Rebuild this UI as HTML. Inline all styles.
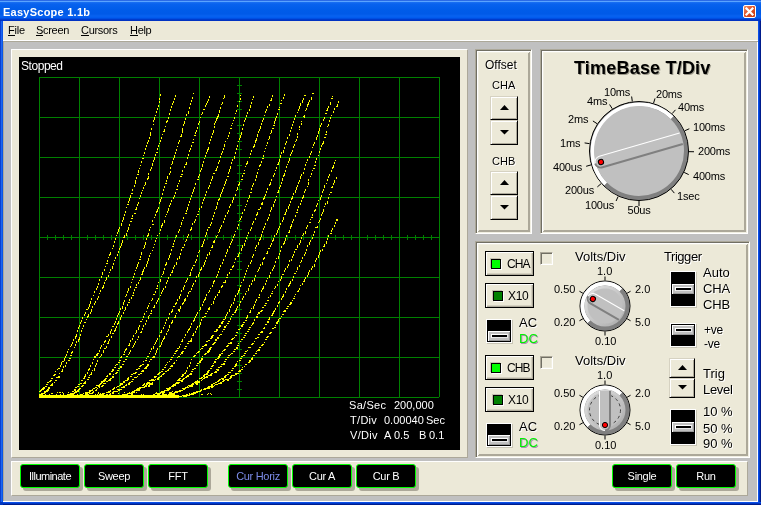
<!DOCTYPE html>
<html><head><meta charset="utf-8">
<style>
*{box-sizing:border-box}
html,body{margin:0;padding:0}
body{width:761px;height:505px;overflow:hidden;position:relative;background:#c0c0c0;font-family:"Liberation Sans",sans-serif;-webkit-font-smoothing:antialiased;}
.a{position:absolute}
.t{position:absolute;white-space:pre;line-height:1;will-change:transform;font-family:"Liberation Sans",sans-serif;color:#000}
#title{left:0;top:0;width:761px;height:21px;background:linear-gradient(to bottom,#2a6ae6 0px,#2a6ae6 1px,#5aa4ff 1px,#5aa4ff 2px,#1c70f2 2px,#0862ee 4px,#005ce9 10px,#005ae8 14px,#0862f0 16px,#005aee 18px,#0044d6 19px,#0032c2 20px,#0032c2 21px)}
#menu{left:3px;top:21px;width:755px;height:20px;background:#ece9d8;border-bottom:1px solid #fff}
.panel{position:absolute;background:#ece9d8;border-top:1px solid #fff;border-left:1px solid #fff;border-right:1px solid #aca899;border-bottom:1px solid #aca899}
.grp{position:absolute;background:#ece9d8;border:1px solid;border-color:#aca899 #fff #fff #aca899;box-shadow:inset 1px 1px 0 #716f64,inset -1px -1px 0 #f1efe2,inset 2px 2px 0 #fff,inset -2px -2px 0 #aca899,inset 3px 3px 0 #f1efe2,inset -3px -3px 0 #aca899}
.chk{position:absolute;width:13px;height:13px;background:#ece9d8;border:1px solid;border-color:#aca899 #fff #fff #aca899;box-shadow:inset 1px 1px 0 #716f64,inset -1px -1px 0 #f1efe2}
.sw{position:absolute;background:#000;border:1px solid #fff;box-shadow:1px 1px 0 #c8c5b5}
.lev{position:absolute;background:#c0c0c0;border:1px solid #000;box-shadow:inset 1px 1px 0 #fff,inset -1px -1px 0 #9a9a9a}
.slot{position:absolute;left:3px;top:3px;width:17px;height:4px;background:#000;border:1px solid;border-color:#fff #e8e8e8 #e8e8e8 #fff}
.btn{position:absolute;background:#ece9d8;border:1px solid;border-color:#d6d2c2 #000 #000 #d6d2c2;box-shadow:inset 1px 1px 0 #fff,inset -1px -1px 0 #aca899}
.btn2{position:absolute;background:#ece9d8;border:1px solid #000;box-shadow:inset 1px 1px 0 #fff,inset -1px -1px 0 #aca899,inset -2px -2px 0 #d4d0c0}
.bbtn{position:absolute;will-change:transform;letter-spacing:-0.3px;width:60px;height:24px;background:#000;border:1px solid #00ff00;border-radius:3px;box-shadow:3px 3px 0 #aca899;color:#fff;font-size:11px;text-align:center;line-height:22px;white-space:pre}
</style></head><body>
<div id="title" class="a"></div>
<div class="t" style="left:3px;top:7px;font-size:11px;font-weight:bold;color:#fff;letter-spacing:0.25px">EasyScope 1.1b</div>
<!-- close button -->
<div class="a" style="left:743px;top:5px;width:13px;height:13px;border-radius:2px;border:1px solid #fff;background:linear-gradient(135deg,#f0906a 0%,#e0542a 45%,#c8380e 100%)"></div>
<svg class="a" style="left:743px;top:5px" width="13" height="13"><path d="M3.5 3.5L9.5 9.5M9.5 3.5L3.5 9.5" stroke="#fff" stroke-width="2.2" stroke-linecap="square"/></svg>
<!-- window borders -->
<div class="a" style="left:0;top:21px;width:3px;height:484px;background:linear-gradient(to right,#0a3ed0 0px,#0a3ed0 1px,#1c66f0 1px,#1c66f0 2px,#0b55e6 2px)"></div>
<div class="a" style="left:758px;top:21px;width:3px;height:481px;background:linear-gradient(to right,#0a4ee8 0px,#0a4ee8 1px,#0036c0 1px,#0036c0 2px,#001c8c 2px)"></div>
<div class="a" style="left:3px;top:502px;width:758px;height:3px;background:linear-gradient(to bottom,#0a4ee8 0px,#0a4ee8 1px,#0036c0 1px,#0036c0 2px,#001c8c 2px)"></div>
<div class="a" style="left:0;top:502px;width:3px;height:3px;background:#0036c0"></div>
<div class="a" style="left:757px;top:42px;width:1px;height:460px;background:#fff"></div>
<div id="menu" class="a"></div>
<div class="a" style="left:3px;top:41px;width:755px;height:1px;background:#aca899"></div>
<div class="a" style="left:3px;top:42px;width:1px;height:460px;background:#aca899"></div>
<div class="a" style="left:3px;top:501px;width:755px;height:1px;background:#fff"></div>
<div class="t" style="left:8px;top:25px;font-size:11px;letter-spacing:-0.2px"><u style="text-decoration:none;border-bottom:1px solid #000;display:inline-block;line-height:11px;height:11px">F</u>ile</div>
<div class="t" style="left:36px;top:25px;font-size:11px;letter-spacing:-0.3px"><u style="text-decoration:none;border-bottom:1px solid #000;display:inline-block;line-height:11px;height:11px">S</u>creen</div>
<div class="t" style="left:81px;top:25px;font-size:11px;letter-spacing:-0.3px"><u style="text-decoration:none;border-bottom:1px solid #000;display:inline-block;line-height:11px;height:11px">C</u>ursors</div>
<div class="t" style="left:130px;top:25px;font-size:11px;letter-spacing:-0.3px"><u style="text-decoration:none;border-bottom:1px solid #000;display:inline-block;line-height:11px;height:11px">H</u>elp</div>

<!-- scope panel -->
<div class="panel" style="left:11px;top:49px;width:457px;height:409px"></div>
<div class="a" style="left:19px;top:57px;width:441px;height:393px;background:#000"></div>
<svg class="a" style="left:0;top:0" width="761" height="505" viewBox="0 0 761 505"><g fill="#008000"><rect x="39" y="77" width="1" height="321"/><rect x="79" y="77" width="1" height="321"/><rect x="119" y="77" width="1" height="321"/><rect x="159" y="77" width="1" height="321"/><rect x="199" y="77" width="1" height="321"/><rect x="239" y="77" width="1" height="321"/><rect x="279" y="77" width="1" height="321"/><rect x="319" y="77" width="1" height="321"/><rect x="359" y="77" width="1" height="321"/><rect x="399" y="77" width="1" height="321"/><rect x="439" y="77" width="1" height="320"/><rect x="39" y="77" width="401" height="1"/><rect x="39" y="117" width="401" height="1"/><rect x="39" y="157" width="401" height="1"/><rect x="39" y="197" width="401" height="1"/><rect x="39" y="237" width="401" height="1"/><rect x="39" y="277" width="401" height="1"/><rect x="39" y="317" width="401" height="1"/><rect x="39" y="357" width="401" height="1"/><rect x="39" y="397" width="400" height="1"/><rect x="47" y="235" width="1" height="5"/><rect x="55" y="235" width="1" height="5"/><rect x="63" y="235" width="1" height="5"/><rect x="71" y="235" width="1" height="5"/><rect x="87" y="235" width="1" height="5"/><rect x="95" y="235" width="1" height="5"/><rect x="103" y="235" width="1" height="5"/><rect x="111" y="235" width="1" height="5"/><rect x="127" y="235" width="1" height="5"/><rect x="135" y="235" width="1" height="5"/><rect x="143" y="235" width="1" height="5"/><rect x="151" y="235" width="1" height="5"/><rect x="167" y="235" width="1" height="5"/><rect x="175" y="235" width="1" height="5"/><rect x="183" y="235" width="1" height="5"/><rect x="191" y="235" width="1" height="5"/><rect x="207" y="235" width="1" height="5"/><rect x="215" y="235" width="1" height="5"/><rect x="223" y="235" width="1" height="5"/><rect x="231" y="235" width="1" height="5"/><rect x="247" y="235" width="1" height="5"/><rect x="255" y="235" width="1" height="5"/><rect x="263" y="235" width="1" height="5"/><rect x="271" y="235" width="1" height="5"/><rect x="287" y="235" width="1" height="5"/><rect x="295" y="235" width="1" height="5"/><rect x="303" y="235" width="1" height="5"/><rect x="311" y="235" width="1" height="5"/><rect x="327" y="235" width="1" height="5"/><rect x="335" y="235" width="1" height="5"/><rect x="343" y="235" width="1" height="5"/><rect x="351" y="235" width="1" height="5"/><rect x="367" y="235" width="1" height="5"/><rect x="375" y="235" width="1" height="5"/><rect x="383" y="235" width="1" height="5"/><rect x="391" y="235" width="1" height="5"/><rect x="407" y="235" width="1" height="5"/><rect x="415" y="235" width="1" height="5"/><rect x="423" y="235" width="1" height="5"/><rect x="431" y="235" width="1" height="5"/><rect x="237" y="85" width="5" height="1"/><rect x="237" y="93" width="5" height="1"/><rect x="237" y="101" width="5" height="1"/><rect x="237" y="109" width="5" height="1"/><rect x="237" y="125" width="5" height="1"/><rect x="237" y="133" width="5" height="1"/><rect x="237" y="141" width="5" height="1"/><rect x="237" y="149" width="5" height="1"/><rect x="237" y="165" width="5" height="1"/><rect x="237" y="173" width="5" height="1"/><rect x="237" y="181" width="5" height="1"/><rect x="237" y="189" width="5" height="1"/><rect x="237" y="205" width="5" height="1"/><rect x="237" y="213" width="5" height="1"/><rect x="237" y="221" width="5" height="1"/><rect x="237" y="229" width="5" height="1"/><rect x="237" y="245" width="5" height="1"/><rect x="237" y="253" width="5" height="1"/><rect x="237" y="261" width="5" height="1"/><rect x="237" y="269" width="5" height="1"/><rect x="237" y="285" width="5" height="1"/><rect x="237" y="293" width="5" height="1"/><rect x="237" y="301" width="5" height="1"/><rect x="237" y="309" width="5" height="1"/><rect x="237" y="325" width="5" height="1"/><rect x="237" y="333" width="5" height="1"/><rect x="237" y="341" width="5" height="1"/><rect x="237" y="349" width="5" height="1"/><rect x="237" y="365" width="5" height="1"/><rect x="237" y="373" width="5" height="1"/><rect x="237" y="381" width="5" height="1"/><rect x="237" y="389" width="5" height="1"/></g><rect x="39" y="395" width="140" height="3" fill="#ffff00"/><path d="M98 393h1v1h-1zM211 394h1v1h-1zM207 394h1v1h-1zM173 393h1v1h-1zM161 392h1v1h-1zM70 393h1v1h-1zM62 392h1v1h-1zM77 394h1v1h-1zM41 393h1v1h-1zM124 392h1v1h-1zM100 393h1v1h-1zM187 395h1v1h-1zM125 394h1v1h-1zM59 392h1v1h-1zM125 394h1v1h-1zM68 392h1v1h-1zM72 394h1v1h-1zM63 394h1v1h-1zM98 392h1v1h-1zM80 394h1v1h-1zM56 394h1v1h-1zM210 393h1v1h-1zM60 394h1v1h-1zM202 394h1v1h-1zM208 393h1v1h-1zM83 393h1v1h-1zM143 394h1v1h-1zM156 392h1v1h-1zM186 395h1v1h-1zM141 394h1v1h-1zM57 392h1v1h-1zM201 394h1v1h-1zM170 392h1v1h-1zM52 393h1v1h-1zM60 392h1v1h-1zM85 393h1v1h-1zM170 393h1v1h-1zM118 393h1v1h-1zM176 392h1v1h-1zM40 394h1v1h-1zM97 394h1v1h-1zM95 394h1v1h-1zM63 393h1v1h-1zM87 393h1v1h-1zM49 394h1v1h-1zM136 392h1v1h-1zM45 394h1v1h-1zM51 393h1v1h-1z" fill="#ffff00" shape-rendering="crispEdges"/><path d="M39 391h2v1h-2zM40 390h2v1h-2zM41 389h2v1h-2zM42 388h2v2h-2zM43 387h2v2h-2zM45 386h2v1h-2zM46 384h2v1h-2zM47 382h2v1h-2zM49 381h2v1h-2zM50 380h2v1h-2zM51 378h2v1h-2zM53 375h2v1h-2zM54 374h2v1h-2zM55 371h1v1h-1zM57 369h1v1h-1zM58 368h2v1h-2zM60 365h1v2h-1zM61 362h1v3h-1zM62 361h2v1h-2zM64 358h1v3h-1zM65 356h1v2h-1zM66 354h1v2h-1zM67 351h1v2h-1zM68 349h1v1h-1zM70 346h1v1h-1zM71 344h1v2h-1zM72 342h1v2h-1zM73 339h1v2h-1zM75 336h1v3h-1zM76 334h1v3h-1zM77 330h1v2h-1zM78 327h1v2h-1zM79 325h1v2h-1zM80 322h1v2h-1zM81 320h1v2h-1zM82 317h1v2h-1zM84 314h1v2h-1zM85 312h1v2h-1zM86 309h2v1h-2zM88 307h1v2h-1zM89 304h1v3h-1zM90 301h1v3h-1zM91 298h1v2h-1zM93 295h1v1h-1zM94 291h1v2h-1zM96 288h1v2h-1zM97 286h1v2h-1zM98 283h1v2h-1zM99 279h1v2h-1zM101 276h1v2h-1zM102 272h1v3h-1zM104 269h1v2h-1zM105 266h1v1h-1zM106 263h2v1h-2zM107 260h1v2h-1zM108 257h1v1h-1zM109 254h1v2h-1zM110 252h1v3h-1zM112 248h1v1h-1zM113 245h1v2h-1zM114 241h1v2h-1zM115 238h1v2h-1zM116 235h1v1h-1zM117 232h1v2h-1zM118 229h1v3h-1zM119 227h1v2h-1zM121 223h1v3h-1zM122 220h1v2h-1zM123 217h1v3h-1zM124 214h1v2h-1zM125 211h1v2h-1zM126 207h1v1h-1zM127 204h2v1h-2zM128 201h1v2h-1zM129 198h1v3h-1zM130 195h1v3h-1zM131 193h2v1h-2zM132 189h1v2h-1zM134 185h1v2h-1zM135 182h1v2h-1zM135 180h1v2h-1zM136 177h1v2h-1zM137 174h2v1h-2zM138 170h1v3h-1zM139 168h1v1h-1zM140 165h1v1h-1zM141 161h1v2h-1zM142 158h2v1h-2zM143 155h1v1h-1zM144 152h1v2h-1zM145 148h1v2h-1zM146 145h1v2h-1zM147 142h1v2h-1zM148 140h1v2h-1zM149 137h1v2h-1zM150 134h1v2h-1zM150 132h1v2h-1zM151 128h1v2h-1zM153 124h1v1h-1zM153 120h1v2h-1zM154 117h1v3h-1zM155 115h1v1h-1zM156 111h1v2h-1zM157 108h1v2h-1zM158 105h1v2h-1zM159 101h1v2h-1zM159 98h1v2h-1zM160 94h1v2h-1zM39 394h2v1h-2zM40 394h2v1h-2zM41 393h2v2h-2zM43 393h2v1h-2zM44 391h2v2h-2zM46 390h2v2h-2zM47 389h2v2h-2zM48 387h2v2h-2zM50 385h2v1h-2zM51 384h2v2h-2zM52 383h1v1h-1zM54 382h1v1h-1zM55 380h2v1h-2zM56 377h2v1h-2zM58 376h2v2h-2zM59 373h1v1h-1zM61 371h2v1h-2zM62 369h1v2h-1zM63 366h1v2h-1zM65 365h1v2h-1zM66 362h1v2h-1zM68 360h2v1h-2zM69 358h2v1h-2zM70 355h2v1h-2zM71 352h1v2h-1zM72 351h1v2h-1zM74 347h1v1h-1zM75 344h1v2h-1zM76 341h1v2h-1zM78 339h1v3h-1zM79 337h1v3h-1zM80 334h1v2h-1zM81 330h1v2h-1zM82 328h1v1h-1zM83 325h1v2h-1zM84 322h2v1h-2zM86 319h1v1h-1zM87 316h1v2h-1zM88 314h1v3h-1zM90 312h1v2h-1zM91 309h1v3h-1zM92 306h1v2h-1zM94 303h1v2h-1zM95 301h1v2h-1zM97 298h1v2h-1zM98 296h1v2h-1zM99 293h1v1h-1zM100 290h1v2h-1zM102 287h1v2h-1zM103 285h1v3h-1zM104 282h1v2h-1zM105 280h1v1h-1zM106 277h1v3h-1zM108 275h1v2h-1zM109 272h1v1h-1zM110 269h1v2h-1zM112 266h1v3h-1zM113 263h1v2h-1zM114 260h1v1h-1zM115 257h1v2h-1zM117 254h1v2h-1zM118 251h1v2h-1zM119 248h1v2h-1zM120 246h1v2h-1zM121 243h1v3h-1zM122 240h1v3h-1zM123 237h2v1h-2zM124 235h1v2h-1zM126 233h1v3h-1zM127 230h1v2h-1zM128 227h1v3h-1zM129 224h1v2h-1zM130 221h2v1h-2zM131 218h2v1h-2zM132 215h1v2h-1zM134 213h2v1h-2zM135 209h2v1h-2zM136 207h1v2h-1zM137 204h1v2h-1zM138 202h1v2h-1zM139 198h1v1h-1zM140 195h1v2h-1zM141 192h1v2h-1zM142 190h1v1h-1zM143 187h1v2h-1zM144 185h1v1h-1zM145 182h1v3h-1zM147 178h1v2h-1zM148 176h1v3h-1zM148 173h1v2h-1zM150 169h1v2h-1zM151 167h1v2h-1zM152 163h1v3h-1zM153 160h1v2h-1zM154 157h1v3h-1zM155 154h1v2h-1zM156 152h2v1h-2zM157 148h1v2h-1zM158 145h1v2h-1zM159 143h1v1h-1zM160 140h1v2h-1zM161 137h1v2h-1zM162 134h1v1h-1zM163 131h2v1h-2zM164 129h1v3h-1zM165 126h1v1h-1zM166 121h1v2h-1zM167 120h1v2h-1zM168 117h1v2h-1zM169 113h1v2h-1zM170 109h1v2h-1zM171 106h1v2h-1zM172 103h1v2h-1zM173 101h1v2h-1zM174 98h1v2h-1zM175 95h1v2h-1zM58 396h2v1h-2zM59 396h2v1h-2zM60 396h2v2h-2zM62 396h2v1h-2zM63 396h2v2h-2zM64 396h2v1h-2zM65 396h2v2h-2zM66 395h2v1h-2zM67 394h2v2h-2zM68 394h2v2h-2zM69 394h2v2h-2zM71 393h2v1h-2zM72 391h2v1h-2zM74 389h2v2h-2zM75 387h2v1h-2zM77 386h2v1h-2zM78 384h2v1h-2zM80 383h2v1h-2zM81 380h2v1h-2zM83 378h1v1h-1zM84 376h1v3h-1zM85 374h1v3h-1zM87 372h1v2h-1zM88 369h1v2h-1zM89 368h1v2h-1zM90 365h1v2h-1zM92 362h1v2h-1zM93 359h1v1h-1zM94 356h2v2h-2zM96 354h2v2h-2zM97 353h2v1h-2zM99 350h1v2h-1zM100 347h1v2h-1zM101 345h1v2h-1zM103 344h1v1h-1zM104 341h1v2h-1zM105 340h1v2h-1zM106 336h2v1h-2zM108 334h1v2h-1zM110 331h1v3h-1zM111 329h1v2h-1zM112 326h2v1h-2zM114 323h1v2h-1zM115 321h1v2h-1zM116 318h1v2h-1zM117 315h1v2h-1zM118 313h1v2h-1zM119 311h1v2h-1zM120 308h1v2h-1zM122 306h1v3h-1zM123 302h1v3h-1zM124 300h1v2h-1zM125 296h1v1h-1zM126 294h1v2h-1zM127 291h1v2h-1zM128 288h1v3h-1zM130 286h1v2h-1zM131 282h1v1h-1zM132 279h1v1h-1zM133 276h1v2h-1zM134 273h1v2h-1zM135 270h1v1h-1zM136 267h1v2h-1zM137 264h1v3h-1zM138 262h1v2h-1zM139 259h2v1h-2zM140 256h1v2h-1zM141 252h1v3h-1zM143 248h1v1h-1zM144 245h1v3h-1zM145 242h1v3h-1zM146 238h1v2h-1zM147 235h1v2h-1zM148 233h1v3h-1zM149 229h1v2h-1zM150 227h1v1h-1zM152 224h2v1h-2zM152 220h1v2h-1zM154 217h1v1h-1zM155 214h1v2h-1zM156 211h1v2h-1zM157 209h1v3h-1zM158 207h1v2h-1zM159 202h1v2h-1zM160 199h1v3h-1zM161 197h1v2h-1zM162 193h1v2h-1zM163 189h1v2h-1zM164 186h1v2h-1zM165 183h2v1h-2zM166 180h1v2h-1zM167 176h1v3h-1zM169 173h1v2h-1zM170 171h1v2h-1zM170 167h1v2h-1zM171 164h1v1h-1zM172 161h1v3h-1zM173 158h1v2h-1zM174 155h1v3h-1zM175 152h1v2h-1zM176 149h1v2h-1zM177 146h1v1h-1zM178 142h1v2h-1zM179 140h1v2h-1zM180 136h2v1h-2zM181 134h1v3h-1zM182 130h1v3h-1zM182 128h1v2h-1zM183 124h1v2h-1zM184 121h1v3h-1zM185 118h1v2h-1zM186 114h1v2h-1zM188 111h1v3h-1zM189 107h1v2h-1zM190 103h1v2h-1zM191 100h1v2h-1zM192 97h1v2h-1zM193 93h1v1h-1zM60 396h2v2h-2zM61 396h1v1h-1zM63 396h2v1h-2zM64 396h1v1h-1zM66 396h2v2h-2zM67 396h1v1h-1zM68 395h2v1h-2zM69 394h2v1h-2zM71 394h2v1h-2zM72 394h2v1h-2zM73 393h2v1h-2zM74 392h1v1h-1zM75 391h2v2h-2zM77 390h2v2h-2zM78 389h2v1h-2zM79 388h2v1h-2zM81 386h2v1h-2zM82 385h2v1h-2zM83 383h1v1h-1zM84 382h2v2h-2zM85 381h1v1h-1zM87 379h2v1h-2zM88 377h2v1h-2zM89 375h1v1h-1zM90 374h1v1h-1zM91 372h1v3h-1zM92 370h1v1h-1zM94 368h1v3h-1zM95 365h1v2h-1zM96 363h1v2h-1zM97 360h1v2h-1zM99 357h1v1h-1zM100 356h1v1h-1zM101 354h1v2h-1zM103 350h1v3h-1zM104 348h2v1h-2zM106 346h1v2h-1zM107 343h1v1h-1zM108 341h1v3h-1zM109 339h1v2h-1zM111 336h1v2h-1zM112 333h2v1h-2zM114 330h1v2h-1zM115 328h1v3h-1zM116 326h1v2h-1zM117 323h1v2h-1zM118 321h1v3h-1zM120 317h1v3h-1zM121 315h1v2h-1zM123 312h1v2h-1zM124 310h1v1h-1zM125 307h1v3h-1zM127 304h1v2h-1zM128 302h2v1h-2zM129 299h1v2h-1zM131 297h1v2h-1zM132 295h2v1h-2zM133 292h1v2h-1zM134 289h1v2h-1zM135 287h2v1h-2zM136 284h1v2h-1zM138 282h1v2h-1zM139 280h1v1h-1zM140 277h1v3h-1zM141 274h2v1h-2zM142 271h1v3h-1zM143 269h1v3h-1zM144 267h1v2h-1zM146 264h1v3h-1zM147 261h1v3h-1zM148 258h1v3h-1zM149 255h1v2h-1zM150 253h1v1h-1zM152 250h1v1h-1zM153 247h1v1h-1zM154 244h1v1h-1zM155 240h1v2h-1zM156 238h1v1h-1zM157 235h1v1h-1zM159 233h1v1h-1zM160 229h1v2h-1zM161 225h1v3h-1zM162 223h1v3h-1zM164 220h1v3h-1zM165 216h1v1h-1zM166 214h1v1h-1zM167 211h1v2h-1zM168 208h1v3h-1zM169 205h1v2h-1zM170 203h1v2h-1zM171 200h1v2h-1zM173 197h1v2h-1zM174 195h1v2h-1zM175 192h1v2h-1zM176 189h2v1h-2zM177 185h1v2h-1zM178 183h1v1h-1zM179 180h1v2h-1zM180 176h2v1h-2zM181 174h2v1h-2zM182 170h1v2h-1zM184 166h1v2h-1zM185 164h1v1h-1zM186 162h1v3h-1zM187 157h1v2h-1zM188 154h1v2h-1zM189 150h1v2h-1zM190 148h1v2h-1zM191 145h1v2h-1zM192 142h2v1h-2zM193 139h1v1h-1zM194 135h2v1h-2zM195 132h1v2h-1zM196 130h1v2h-1zM197 127h1v2h-1zM198 123h1v2h-1zM199 121h1v2h-1zM200 117h1v1h-1zM201 114h1v1h-1zM202 112h1v2h-1zM203 109h2v1h-2zM205 105h1v2h-1zM206 103h1v2h-1zM207 101h1v2h-1zM208 99h1v2h-1zM209 96h1v2h-1zM68 396h1v1h-1zM69 396h2v1h-2zM71 396h2v1h-2zM72 396h2v1h-2zM73 396h2v1h-2zM75 396h2v1h-2zM77 396h2v1h-2zM78 396h2v1h-2zM79 395h2v1h-2zM81 394h2v1h-2zM82 394h1v1h-1zM83 393h1v1h-1zM85 392h2v2h-2zM86 392h2v1h-2zM88 392h2v1h-2zM89 390h2v2h-2zM90 390h2v1h-2zM91 390h2v1h-2zM92 389h1v1h-1zM93 388h2v1h-2zM95 387h2v1h-2zM96 385h2v1h-2zM98 385h2v2h-2zM99 384h2v1h-2zM100 383h2v1h-2zM101 381h2v2h-2zM103 380h2v2h-2zM104 379h2v2h-2zM105 378h2v1h-2zM106 376h2v1h-2zM107 375h1v1h-1zM109 373h2v2h-2zM111 371h2v1h-2zM112 369h2v2h-2zM114 367h2v1h-2zM115 365h1v1h-1zM116 364h2v1h-2zM118 362h2v1h-2zM119 360h2v1h-2zM120 357h2v1h-2zM121 356h1v1h-1zM123 354h2v1h-2zM124 351h1v2h-1zM125 349h1v2h-1zM126 348h1v2h-1zM128 345h2v1h-2zM129 343h1v2h-1zM130 340h1v2h-1zM132 338h1v2h-1zM133 335h1v2h-1zM135 333h1v1h-1zM136 330h1v3h-1zM138 327h1v3h-1zM139 325h1v2h-1zM140 321h2v1h-2zM142 319h1v1h-1zM143 316h1v2h-1zM144 313h1v2h-1zM146 311h1v1h-1zM147 307h1v2h-1zM148 305h1v2h-1zM149 303h1v1h-1zM151 300h1v1h-1zM152 298h1v2h-1zM153 294h2v1h-2zM155 291h1v2h-1zM156 288h2v1h-2zM157 285h1v2h-1zM158 282h1v1h-1zM160 279h1v3h-1zM161 276h1v1h-1zM162 274h1v1h-1zM163 271h1v3h-1zM164 268h1v2h-1zM165 264h1v2h-1zM166 262h1v3h-1zM168 258h1v2h-1zM169 255h1v3h-1zM170 253h1v2h-1zM171 249h1v2h-1zM172 246h2v1h-2zM173 243h1v2h-1zM174 240h1v2h-1zM175 237h1v1h-1zM176 235h1v2h-1zM178 231h1v2h-1zM179 229h1v2h-1zM180 226h1v1h-1zM181 222h1v3h-1zM182 220h1v1h-1zM183 217h1v2h-1zM185 213h2v1h-2zM186 210h1v2h-1zM187 207h1v3h-1zM188 204h1v2h-1zM189 201h1v2h-1zM190 198h1v2h-1zM191 195h1v2h-1zM192 192h1v2h-1zM193 189h1v3h-1zM194 187h1v2h-1zM195 183h1v2h-1zM197 179h2v1h-2zM198 176h1v2h-1zM199 174h1v2h-1zM200 170h1v2h-1zM201 168h1v2h-1zM202 164h1v3h-1zM203 161h1v2h-1zM204 158h1v1h-1zM205 155h1v2h-1zM206 152h1v2h-1zM207 149h1v3h-1zM208 147h1v3h-1zM209 142h1v2h-1zM210 139h1v2h-1zM211 136h1v2h-1zM212 133h1v2h-1zM213 130h1v3h-1zM214 126h1v2h-1zM214 123h1v2h-1zM215 121h1v2h-1zM216 118h1v3h-1zM217 116h1v3h-1zM218 114h1v3h-1zM219 110h1v3h-1zM220 107h1v2h-1zM221 104h1v1h-1zM222 102h1v2h-1zM223 98h1v1h-1zM224 95h1v3h-1zM72 396h2v1h-2zM73 396h2v2h-2zM74 396h1v1h-1zM76 396h2v1h-2zM77 396h2v1h-2zM79 396h2v1h-2zM80 396h2v1h-2zM81 396h2v1h-2zM82 396h1v1h-1zM84 395h2v1h-2zM85 394h2v1h-2zM86 394h2v1h-2zM87 394h2v1h-2zM89 393h2v1h-2zM90 393h1v1h-1zM91 393h2v1h-2zM92 392h2v1h-2zM93 391h1v1h-1zM95 390h2v1h-2zM96 389h1v1h-1zM97 388h1v1h-1zM99 387h1v1h-1zM101 386h2v1h-2zM102 385h2v1h-2zM103 383h2v1h-2zM105 383h1v1h-1zM106 381h2v1h-2zM108 380h2v1h-2zM109 379h2v2h-2zM110 378h2v1h-2zM112 376h2v2h-2zM113 374h1v1h-1zM115 373h2v1h-2zM116 372h2v1h-2zM117 370h2v1h-2zM118 368h2v1h-2zM120 366h2v2h-2zM122 364h2v1h-2zM123 361h2v1h-2zM125 359h2v1h-2zM126 356h2v1h-2zM128 354h1v1h-1zM129 352h1v2h-1zM130 350h1v2h-1zM132 347h1v1h-1zM133 345h1v2h-1zM134 343h1v2h-1zM135 341h1v2h-1zM137 339h1v1h-1zM138 336h1v2h-1zM140 332h1v1h-1zM141 331h1v2h-1zM142 328h1v2h-1zM143 325h1v2h-1zM145 323h1v2h-1zM146 320h1v2h-1zM148 316h1v3h-1zM149 315h1v1h-1zM150 313h2v1h-2zM151 310h1v2h-1zM153 307h2v1h-2zM154 305h1v2h-1zM156 302h1v2h-1zM157 300h1v2h-1zM158 298h1v2h-1zM160 295h1v1h-1zM161 292h1v2h-1zM162 290h1v2h-1zM163 288h1v2h-1zM165 286h1v2h-1zM166 282h1v2h-1zM167 280h1v2h-1zM168 277h1v2h-1zM170 274h1v2h-1zM171 272h2v1h-2zM172 270h1v2h-1zM173 267h1v2h-1zM174 265h1v2h-1zM176 262h1v3h-1zM177 258h1v2h-1zM179 256h1v3h-1zM180 253h1v2h-1zM181 249h1v2h-1zM182 247h2v1h-2zM184 244h1v2h-1zM185 241h1v1h-1zM186 239h1v2h-1zM187 236h1v2h-1zM188 234h1v2h-1zM190 229h1v2h-1zM191 227h1v3h-1zM192 223h1v2h-1zM194 221h1v2h-1zM195 219h1v2h-1zM196 216h1v1h-1zM197 214h2v1h-2zM198 211h1v1h-1zM199 208h1v2h-1zM201 206h1v2h-1zM202 202h1v2h-1zM203 199h1v2h-1zM204 197h1v2h-1zM205 194h1v2h-1zM206 191h1v2h-1zM208 187h1v2h-1zM209 185h1v2h-1zM210 182h1v2h-1zM211 179h1v2h-1zM212 176h1v3h-1zM213 173h2v1h-2zM215 170h2v1h-2zM216 168h1v3h-1zM217 166h1v2h-1zM218 162h1v2h-1zM219 160h1v2h-1zM220 156h1v2h-1zM221 153h1v2h-1zM222 151h1v2h-1zM223 148h1v2h-1zM224 144h1v3h-1zM225 141h1v1h-1zM227 138h1v1h-1zM228 135h1v2h-1zM229 132h1v2h-1zM230 128h2v1h-2zM231 125h1v1h-1zM232 123h1v1h-1zM233 120h1v1h-1zM234 117h1v2h-1zM235 113h1v1h-1zM236 110h1v2h-1zM237 105h1v2h-1zM239 101h1v1h-1zM240 98h1v2h-1zM240 95h1v1h-1zM82 396h2v1h-2zM83 396h2v1h-2zM85 396h2v1h-2zM86 396h2v2h-2zM87 396h2v1h-2zM88 396h1v1h-1zM89 396h2v1h-2zM91 396h2v2h-2zM92 396h2v1h-2zM94 395h2v1h-2zM95 395h2v1h-2zM96 395h2v1h-2zM98 395h1v1h-1zM99 394h2v2h-2zM100 394h2v1h-2zM102 393h2v2h-2zM103 393h2v1h-2zM104 393h1v1h-1zM106 392h2v1h-2zM108 391h2v2h-2zM109 391h2v1h-2zM110 390h1v1h-1zM112 389h2v1h-2zM113 388h2v1h-2zM114 387h1v1h-1zM116 387h1v1h-1zM117 386h2v1h-2zM119 385h2v1h-2zM120 383h2v2h-2zM121 383h2v2h-2zM123 381h2v2h-2zM125 380h2v1h-2zM126 380h2v1h-2zM127 378h2v2h-2zM128 377h1v1h-1zM130 376h2v1h-2zM131 374h2v1h-2zM133 373h2v1h-2zM134 373h2v1h-2zM135 372h2v1h-2zM136 369h2v1h-2zM138 368h2v1h-2zM139 366h2v1h-2zM140 365h2v1h-2zM142 364h2v1h-2zM143 361h1v1h-1zM145 360h2v1h-2zM146 358h1v1h-1zM147 356h2v1h-2zM149 353h1v1h-1zM150 351h1v1h-1zM151 348h1v2h-1zM153 346h1v3h-1zM154 344h1v1h-1zM155 342h1v2h-1zM156 340h1v2h-1zM157 338h1v2h-1zM159 335h1v2h-1zM160 332h2v1h-2zM161 330h1v2h-1zM163 327h1v2h-1zM164 325h1v1h-1zM165 322h1v2h-1zM166 319h1v2h-1zM168 317h1v2h-1zM169 313h1v2h-1zM171 311h1v2h-1zM172 309h1v3h-1zM173 306h2v1h-2zM175 303h1v2h-1zM176 302h1v2h-1zM177 299h1v2h-1zM179 296h1v3h-1zM180 294h1v2h-1zM181 290h1v2h-1zM183 287h1v3h-1zM184 285h1v2h-1zM185 282h1v1h-1zM186 280h1v2h-1zM187 278h1v2h-1zM189 275h2v1h-2zM190 272h1v3h-1zM191 269h1v2h-1zM192 267h1v2h-1zM193 265h2v1h-2zM195 261h1v2h-1zM196 259h1v2h-1zM197 255h1v2h-1zM198 252h1v1h-1zM199 250h1v2h-1zM201 246h2v1h-2zM202 244h1v2h-1zM203 241h1v3h-1zM204 239h1v2h-1zM205 235h1v2h-1zM206 232h1v3h-1zM207 229h1v2h-1zM208 227h2v1h-2zM210 224h1v2h-1zM211 222h1v2h-1zM212 218h1v2h-1zM213 215h1v2h-1zM214 212h1v2h-1zM215 209h1v1h-1zM216 206h1v3h-1zM217 202h1v3h-1zM218 199h1v2h-1zM219 198h1v2h-1zM220 194h1v3h-1zM221 192h1v2h-1zM222 189h1v3h-1zM223 187h1v2h-1zM224 184h1v2h-1zM225 181h1v3h-1zM226 179h1v2h-1zM227 176h2v1h-2zM228 172h1v2h-1zM229 169h1v3h-1zM230 166h1v3h-1zM231 162h1v2h-1zM232 159h1v2h-1zM234 156h1v3h-1zM235 152h1v2h-1zM236 148h1v2h-1zM237 145h1v2h-1zM238 141h1v1h-1zM239 138h1v2h-1zM240 135h1v3h-1zM241 132h1v3h-1zM242 128h1v2h-1zM243 124h1v2h-1zM244 120h1v2h-1zM245 118h1v2h-1zM246 115h1v2h-1zM247 112h1v2h-1zM249 109h1v2h-1zM250 105h1v3h-1zM251 102h1v2h-1zM252 99h1v1h-1zM253 96h1v2h-1zM89 396h2v1h-2zM90 396h2v1h-2zM92 396h2v2h-2zM93 396h2v1h-2zM94 396h2v2h-2zM96 396h1v1h-1zM97 396h1v1h-1zM99 396h1v1h-1zM100 396h2v2h-2zM101 396h2v1h-2zM103 396h1v1h-1zM104 395h2v1h-2zM106 394h2v1h-2zM107 394h1v1h-1zM109 394h2v1h-2zM110 393h1v1h-1zM112 392h2v2h-2zM113 391h2v1h-2zM115 391h2v1h-2zM116 391h2v1h-2zM117 389h2v1h-2zM118 389h2v2h-2zM120 389h2v1h-2zM121 387h2v1h-2zM122 387h2v1h-2zM123 386h2v2h-2zM125 385h2v1h-2zM126 384h1v1h-1zM128 383h2v2h-2zM129 382h2v1h-2zM131 381h2v1h-2zM132 379h2v1h-2zM133 379h1v1h-1zM134 377h2v1h-2zM136 377h1v1h-1zM137 376h1v1h-1zM138 374h2v1h-2zM140 373h2v1h-2zM141 371h2v1h-2zM142 370h2v2h-2zM144 368h2v1h-2zM145 367h2v2h-2zM146 366h2v1h-2zM147 364h2v2h-2zM149 361h1v1h-1zM150 359h2v1h-2zM152 357h2v1h-2zM153 356h2v2h-2zM155 353h1v2h-1zM156 350h1v3h-1zM157 348h1v2h-1zM159 346h1v1h-1zM160 345h1v2h-1zM161 342h1v3h-1zM162 340h1v2h-1zM163 338h1v2h-1zM164 336h1v3h-1zM166 333h1v2h-1zM167 331h1v1h-1zM168 329h1v2h-1zM169 325h1v3h-1zM171 322h1v2h-1zM172 320h1v3h-1zM174 317h1v1h-1zM175 315h1v3h-1zM176 313h1v1h-1zM178 309h1v2h-1zM179 309h1v3h-1zM180 306h1v3h-1zM182 303h1v2h-1zM183 302h1v2h-1zM184 299h1v3h-1zM185 298h1v3h-1zM187 295h1v2h-1zM188 292h1v2h-1zM189 291h2v1h-2zM191 288h1v2h-1zM192 285h1v2h-1zM193 283h1v2h-1zM195 280h1v2h-1zM196 276h1v2h-1zM198 274h1v3h-1zM199 272h1v2h-1zM200 269h1v2h-1zM201 267h1v3h-1zM203 265h1v2h-1zM204 262h1v3h-1zM205 260h1v2h-1zM206 257h1v2h-1zM207 254h1v2h-1zM209 252h1v3h-1zM210 250h1v1h-1zM211 247h2v1h-2zM212 245h1v3h-1zM213 241h1v2h-1zM214 240h1v3h-1zM216 236h1v2h-1zM217 235h1v1h-1zM218 232h1v1h-1zM219 229h1v3h-1zM220 227h1v2h-1zM221 225h1v2h-1zM223 221h1v2h-1zM224 218h1v2h-1zM225 215h1v2h-1zM227 212h1v2h-1zM228 210h1v2h-1zM229 206h1v2h-1zM230 204h1v2h-1zM232 200h1v3h-1zM233 197h1v3h-1zM235 194h1v2h-1zM236 190h1v1h-1zM237 187h1v3h-1zM238 184h1v2h-1zM239 182h1v3h-1zM241 179h2v1h-2zM242 175h1v2h-1zM243 173h2v1h-2zM244 170h1v1h-1zM245 166h1v1h-1zM246 163h1v2h-1zM247 161h1v3h-1zM249 157h1v1h-1zM250 153h1v2h-1zM251 150h1v2h-1zM253 146h1v2h-1zM254 144h1v3h-1zM255 140h1v3h-1zM256 138h1v3h-1zM257 134h1v3h-1zM258 131h1v2h-1zM259 129h1v2h-1zM260 126h1v3h-1zM261 123h1v2h-1zM262 120h1v2h-1zM263 118h1v2h-1zM264 115h1v1h-1zM265 111h1v2h-1zM266 109h1v2h-1zM267 106h1v2h-1zM269 104h1v2h-1zM270 100h1v1h-1zM271 98h1v3h-1zM272 95h1v2h-1zM106 396h1v1h-1zM107 396h2v1h-2zM108 396h2v1h-2zM110 396h2v1h-2zM111 396h2v1h-2zM113 396h1v1h-1zM114 396h2v1h-2zM115 396h2v1h-2zM116 396h2v1h-2zM117 396h2v1h-2zM119 396h2v1h-2zM120 395h2v1h-2zM122 394h2v1h-2zM124 395h2v1h-2zM125 394h1v1h-1zM126 394h2v1h-2zM127 393h2v1h-2zM128 393h2v1h-2zM129 392h1v1h-1zM131 392h1v1h-1zM132 391h2v1h-2zM133 391h2v1h-2zM134 390h2v1h-2zM136 389h2v2h-2zM137 388h2v2h-2zM138 388h2v2h-2zM139 387h2v1h-2zM141 387h2v1h-2zM142 385h2v1h-2zM143 384h2v1h-2zM144 383h1v1h-1zM146 383h1v1h-1zM147 382h2v2h-2zM148 382h2v1h-2zM149 380h2v1h-2zM151 379h2v2h-2zM152 379h2v1h-2zM154 376h2v2h-2zM155 376h2v1h-2zM157 374h2v1h-2zM158 373h2v1h-2zM159 372h2v1h-2zM161 371h2v1h-2zM162 369h2v1h-2zM164 367h2v1h-2zM165 365h1v1h-1zM166 364h1v1h-1zM167 362h1v1h-1zM169 361h1v1h-1zM170 359h2v1h-2zM171 357h2v1h-2zM173 355h1v1h-1zM174 353h2v1h-2zM175 351h2v1h-2zM176 350h2v1h-2zM177 348h2v1h-2zM179 346h1v2h-1zM180 344h1v1h-1zM181 341h2v1h-2zM182 339h1v2h-1zM184 337h1v1h-1zM185 334h1v2h-1zM187 331h1v2h-1zM188 329h1v2h-1zM189 328h1v2h-1zM190 326h1v2h-1zM191 323h1v2h-1zM193 320h1v2h-1zM194 318h1v3h-1zM195 316h1v2h-1zM196 314h1v2h-1zM197 312h1v2h-1zM199 310h1v1h-1zM200 307h1v3h-1zM202 304h1v2h-1zM203 301h1v2h-1zM204 299h1v2h-1zM205 297h1v3h-1zM206 294h1v2h-1zM208 292h1v1h-1zM209 290h1v2h-1zM210 288h1v1h-1zM212 285h1v2h-1zM213 281h1v3h-1zM214 280h1v2h-1zM216 276h1v2h-1zM217 274h1v2h-1zM218 271h1v2h-1zM219 268h1v2h-1zM220 265h1v2h-1zM222 262h1v2h-1zM223 259h1v2h-1zM225 255h1v2h-1zM226 252h1v2h-1zM227 249h1v3h-1zM229 246h1v2h-1zM230 243h1v2h-1zM231 241h1v2h-1zM232 239h1v2h-1zM233 236h1v2h-1zM234 234h1v2h-1zM235 231h1v1h-1zM237 227h1v2h-1zM238 224h1v2h-1zM239 220h1v1h-1zM240 218h1v2h-1zM241 216h1v2h-1zM242 212h1v2h-1zM244 209h1v2h-1zM245 206h1v1h-1zM246 204h1v1h-1zM247 200h1v2h-1zM248 198h1v1h-1zM249 195h1v3h-1zM250 192h2v1h-2zM251 188h1v2h-1zM252 185h1v2h-1zM253 183h1v2h-1zM255 179h1v2h-1zM256 175h1v3h-1zM257 172h1v2h-1zM258 169h1v1h-1zM259 165h1v2h-1zM260 164h1v2h-1zM261 161h1v2h-1zM262 158h2v1h-2zM263 155h1v2h-1zM264 151h1v1h-1zM265 148h1v1h-1zM266 145h1v1h-1zM267 142h1v2h-1zM268 139h1v1h-1zM269 136h1v3h-1zM270 133h1v1h-1zM271 130h1v3h-1zM272 128h2v1h-2zM273 125h2v1h-2zM274 121h1v3h-1zM275 118h1v3h-1zM276 116h1v2h-1zM277 113h1v2h-1zM278 109h2v1h-2zM279 107h1v1h-1zM280 103h2v1h-2zM281 100h1v1h-1zM283 97h1v2h-1zM284 94h1v2h-1zM105 396h1v1h-1zM106 396h2v1h-2zM107 396h2v1h-2zM109 396h1v1h-1zM110 396h2v1h-2zM112 396h2v1h-2zM113 396h2v1h-2zM115 396h1v1h-1zM116 396h2v1h-2zM117 396h2v1h-2zM118 395h2v1h-2zM120 395h2v2h-2zM121 395h2v1h-2zM122 394h2v1h-2zM124 394h2v1h-2zM125 394h2v1h-2zM126 394h2v1h-2zM128 393h1v1h-1zM129 393h2v1h-2zM131 393h2v2h-2zM132 392h1v1h-1zM133 391h2v2h-2zM135 390h2v1h-2zM136 390h2v1h-2zM138 389h2v2h-2zM139 389h1v1h-1zM140 388h1v1h-1zM142 387h2v1h-2zM143 387h2v1h-2zM144 386h1v1h-1zM145 385h2v2h-2zM146 384h2v1h-2zM148 385h2v2h-2zM149 383h2v2h-2zM151 383h2v2h-2zM152 382h1v1h-1zM153 380h2v1h-2zM154 380h1v1h-1zM155 379h1v1h-1zM157 378h2v2h-2zM158 377h2v1h-2zM160 376h2v1h-2zM161 375h1v1h-1zM162 374h2v1h-2zM163 373h2v1h-2zM165 371h2v1h-2zM167 370h2v1h-2zM168 369h1v1h-1zM169 368h2v1h-2zM170 366h1v1h-1zM171 365h2v2h-2zM173 363h2v1h-2zM174 362h1v1h-1zM176 360h1v1h-1zM177 357h1v1h-1zM178 356h2v1h-2zM180 354h1v1h-1zM181 352h2v2h-2zM182 351h2v1h-2zM184 348h2v1h-2zM185 346h2v1h-2zM187 343h2v1h-2zM188 341h2v1h-2zM190 340h2v2h-2zM191 338h1v3h-1zM192 335h2v1h-2zM193 333h1v2h-1zM195 331h1v2h-1zM196 328h1v2h-1zM197 326h1v2h-1zM199 325h1v2h-1zM200 322h1v3h-1zM201 319h1v2h-1zM202 317h2v1h-2zM204 316h2v1h-2zM205 313h2v1h-2zM207 311h1v1h-1zM208 308h1v2h-1zM209 307h1v3h-1zM211 304h1v1h-1zM213 301h1v3h-1zM214 298h1v2h-1zM215 296h1v2h-1zM217 294h1v2h-1zM218 292h2v1h-2zM219 290h1v2h-1zM221 286h1v2h-1zM222 285h1v2h-1zM223 282h2v1h-2zM225 280h1v3h-1zM226 277h2v1h-2zM227 274h1v2h-1zM229 272h1v2h-1zM230 269h2v1h-2zM232 266h1v2h-1zM233 265h1v2h-1zM234 262h1v1h-1zM235 258h1v2h-1zM237 256h2v1h-2zM238 254h1v2h-1zM239 252h1v2h-1zM241 248h1v3h-1zM242 245h1v3h-1zM244 243h1v3h-1zM245 240h1v2h-1zM246 237h1v2h-1zM247 235h1v1h-1zM248 232h1v2h-1zM250 229h1v2h-1zM251 227h1v2h-1zM252 223h1v2h-1zM253 221h1v2h-1zM255 218h1v2h-1zM256 214h1v2h-1zM257 212h1v3h-1zM258 209h2v1h-2zM260 207h1v2h-1zM261 203h1v2h-1zM262 202h1v3h-1zM263 198h1v2h-1zM264 196h1v3h-1zM265 194h1v2h-1zM266 191h1v2h-1zM267 188h1v2h-1zM269 184h1v2h-1zM270 182h1v3h-1zM271 179h1v2h-1zM273 175h1v2h-1zM274 173h1v2h-1zM275 170h1v1h-1zM276 167h1v2h-1zM277 164h2v1h-2zM278 162h1v2h-1zM279 159h1v3h-1zM280 155h1v3h-1zM281 152h1v2h-1zM283 150h1v3h-1zM284 147h1v2h-1zM285 143h1v2h-1zM286 141h1v2h-1zM287 137h1v2h-1zM289 134h1v2h-1zM290 130h1v2h-1zM291 127h1v2h-1zM292 124h1v2h-1zM293 121h1v2h-1zM294 118h1v2h-1zM295 115h1v2h-1zM297 112h1v1h-1zM298 109h1v2h-1zM299 106h1v3h-1zM300 103h1v3h-1zM302 100h1v3h-1zM303 98h1v2h-1zM304 95h2v1h-2zM145 396h2v1h-2zM147 396h2v1h-2zM148 396h2v2h-2zM150 396h2v1h-2zM151 396h2v1h-2zM152 396h2v1h-2zM154 396h2v1h-2zM155 395h2v2h-2zM156 395h2v1h-2zM157 394h2v1h-2zM159 394h1v1h-1zM160 393h1v1h-1zM162 392h2v2h-2zM163 392h2v1h-2zM164 391h1v1h-1zM166 390h2v1h-2zM167 389h2v2h-2zM168 388h2v2h-2zM169 387h2v1h-2zM171 386h1v1h-1zM172 385h2v1h-2zM173 384h2v2h-2zM175 383h2v1h-2zM176 382h2v2h-2zM177 380h2v1h-2zM178 379h2v1h-2zM179 378h2v1h-2zM181 376h2v1h-2zM182 374h2v2h-2zM184 373h2v1h-2zM185 372h1v2h-1zM186 370h1v2h-1zM187 367h1v2h-1zM189 365h1v2h-1zM190 362h1v2h-1zM191 359h1v1h-1zM193 356h2v1h-2zM194 355h2v1h-2zM196 353h1v1h-1zM197 352h2v1h-2zM198 351h2v1h-2zM200 349h1v1h-1zM201 348h2v1h-2zM202 346h2v1h-2zM204 345h1v1h-1zM205 344h2v2h-2zM206 341h2v1h-2zM208 340h2v1h-2zM210 338h2v1h-2zM211 336h2v2h-2zM212 335h2v1h-2zM214 331h2v1h-2zM215 331h2v1h-2zM216 329h2v2h-2zM218 327h2v1h-2zM219 325h2v2h-2zM221 322h2v2h-2zM222 321h2v1h-2zM223 319h2v1h-2zM225 316h1v3h-1zM226 314h1v2h-1zM227 312h1v2h-1zM229 309h1v3h-1zM230 306h1v2h-1zM231 304h1v2h-1zM233 302h1v2h-1zM234 298h1v3h-1zM235 295h1v2h-1zM237 293h1v2h-1zM238 290h1v3h-1zM239 288h1v3h-1zM240 285h1v2h-1zM241 282h1v1h-1zM243 279h1v2h-1zM244 276h1v2h-1zM245 273h1v2h-1zM246 270h1v2h-1zM247 268h1v1h-1zM248 265h1v2h-1zM250 262h1v2h-1zM251 260h1v2h-1zM252 256h1v2h-1zM253 254h1v2h-1zM255 250h1v1h-1zM255 247h1v2h-1zM256 245h1v2h-1zM258 242h1v3h-1zM259 239h1v2h-1zM260 237h1v3h-1zM261 234h1v3h-1zM262 231h1v2h-1zM263 228h1v2h-1zM264 226h1v2h-1zM265 223h1v2h-1zM267 219h1v2h-1zM268 217h1v2h-1zM269 214h1v2h-1zM270 210h1v2h-1zM271 207h1v3h-1zM273 204h1v3h-1zM274 201h1v2h-1zM275 199h1v2h-1zM276 196h1v1h-1zM277 192h2v1h-2zM278 190h1v2h-1zM279 187h1v2h-1zM280 185h1v2h-1zM281 182h1v2h-1zM282 178h1v3h-1zM283 175h1v2h-1zM284 173h1v3h-1zM285 170h1v2h-1zM286 166h1v2h-1zM287 164h1v1h-1zM288 161h1v2h-1zM289 158h1v3h-1zM290 154h1v2h-1zM291 152h1v2h-1zM292 150h1v2h-1zM293 146h1v2h-1zM294 144h1v2h-1zM295 141h1v1h-1zM296 139h1v2h-1zM297 136h1v2h-1zM297 133h1v2h-1zM299 129h1v1h-1zM299 126h1v2h-1zM301 123h1v2h-1zM301 121h1v1h-1zM303 116h1v1h-1zM304 115h1v3h-1zM305 110h1v1h-1zM306 108h1v2h-1zM307 104h1v3h-1zM308 102h1v3h-1zM309 100h1v2h-1zM311 97h1v3h-1zM312 93h2v1h-2zM134 396h1v1h-1zM135 396h2v1h-2zM137 396h2v2h-2zM138 396h2v1h-2zM140 396h2v2h-2zM141 396h2v1h-2zM143 396h2v1h-2zM144 396h2v2h-2zM145 396h2v1h-2zM146 396h2v1h-2zM147 395h2v1h-2zM149 395h2v1h-2zM150 395h2v1h-2zM151 395h2v1h-2zM153 394h2v2h-2zM154 394h1v1h-1zM155 393h2v1h-2zM157 393h1v1h-1zM158 393h2v1h-2zM160 392h2v1h-2zM161 391h2v1h-2zM163 391h1v1h-1zM164 390h2v1h-2zM166 388h1v1h-1zM167 388h2v2h-2zM169 388h2v1h-2zM170 387h1v1h-1zM172 386h2v1h-2zM173 385h2v1h-2zM174 384h2v2h-2zM176 383h2v1h-2zM177 383h2v1h-2zM178 382h2v1h-2zM179 380h2v1h-2zM181 380h2v2h-2zM182 379h2v1h-2zM183 378h2v1h-2zM185 377h2v1h-2zM186 376h2v1h-2zM187 375h2v2h-2zM189 374h1v1h-1zM190 373h2v2h-2zM191 371h2v1h-2zM192 369h2v1h-2zM194 368h2v1h-2zM196 365h2v1h-2zM197 363h2v1h-2zM199 361h2v2h-2zM200 360h2v1h-2zM201 358h2v2h-2zM202 356h1v1h-1zM204 354h2v1h-2zM205 353h2v1h-2zM207 351h2v2h-2zM208 350h2v2h-2zM209 348h2v2h-2zM210 347h2v1h-2zM212 344h2v1h-2zM213 343h2v1h-2zM214 342h2v1h-2zM215 339h2v2h-2zM217 337h2v2h-2zM219 335h1v1h-1zM220 334h2v1h-2zM222 331h1v1h-1zM223 329h2v1h-2zM224 326h2v2h-2zM226 325h1v1h-1zM227 323h2v1h-2zM228 321h2v1h-2zM230 318h1v2h-1zM231 316h1v1h-1zM232 314h2v1h-2zM234 312h2v1h-2zM235 310h1v3h-1zM236 308h1v3h-1zM237 306h1v2h-1zM239 304h1v2h-1zM240 301h1v2h-1zM242 298h1v2h-1zM243 296h1v2h-1zM245 293h1v2h-1zM246 291h1v1h-1zM248 288h1v3h-1zM249 285h1v2h-1zM251 283h1v2h-1zM252 280h1v2h-1zM254 278h1v3h-1zM255 275h1v2h-1zM257 271h1v1h-1zM258 269h1v2h-1zM259 267h1v2h-1zM260 264h1v2h-1zM262 262h1v3h-1zM263 258h1v2h-1zM264 257h1v2h-1zM266 253h2v1h-2zM267 251h1v2h-1zM268 248h2v1h-2zM270 245h1v2h-1zM271 243h1v2h-1zM272 240h1v2h-1zM273 238h1v3h-1zM274 235h1v2h-1zM276 233h1v2h-1zM277 230h1v3h-1zM278 228h1v2h-1zM279 226h1v2h-1zM280 223h1v2h-1zM282 220h1v2h-1zM283 217h1v3h-1zM284 214h1v1h-1zM285 212h1v3h-1zM286 209h1v3h-1zM288 206h1v3h-1zM289 204h1v2h-1zM290 201h1v2h-1zM291 198h1v2h-1zM292 196h1v3h-1zM293 193h1v2h-1zM295 190h1v3h-1zM296 187h1v3h-1zM297 185h1v2h-1zM298 182h1v2h-1zM299 180h1v2h-1zM300 176h1v3h-1zM301 174h1v2h-1zM303 172h1v2h-1zM304 168h1v2h-1zM305 164h1v2h-1zM306 162h1v1h-1zM307 159h1v2h-1zM309 156h1v2h-1zM310 153h1v2h-1zM311 151h1v2h-1zM312 147h1v1h-1zM313 144h1v2h-1zM314 142h1v2h-1zM316 137h1v3h-1zM317 135h1v2h-1zM318 131h1v3h-1zM319 128h1v3h-1zM320 125h1v2h-1zM321 123h1v2h-1zM323 119h1v2h-1zM324 117h1v2h-1zM325 113h2v1h-2zM326 110h2v1h-2zM327 108h1v3h-1zM328 106h1v2h-1zM330 102h1v3h-1zM331 98h2v1h-2zM332 96h1v1h-1zM151 396h2v1h-2zM152 396h2v1h-2zM154 396h2v1h-2zM156 396h2v1h-2zM157 396h2v2h-2zM158 396h2v1h-2zM159 396h1v1h-1zM161 396h1v1h-1zM162 396h2v2h-2zM163 396h2v2h-2zM164 396h1v1h-1zM165 395h2v1h-2zM166 396h2v1h-2zM168 394h2v1h-2zM169 394h2v2h-2zM170 395h2v1h-2zM171 393h2v1h-2zM173 394h2v1h-2zM174 393h1v1h-1zM176 392h2v1h-2zM177 391h2v1h-2zM179 391h2v1h-2zM180 391h1v1h-1zM181 390h2v1h-2zM183 389h2v1h-2zM184 388h2v1h-2zM185 387h2v1h-2zM187 387h2v1h-2zM188 385h1v1h-1zM190 385h2v1h-2zM191 385h2v2h-2zM192 383h2v1h-2zM194 382h2v1h-2zM195 381h2v1h-2zM196 381h2v2h-2zM197 380h1v1h-1zM199 378h1v1h-1zM200 378h2v1h-2zM201 377h2v1h-2zM203 375h2v2h-2zM204 374h2v1h-2zM206 373h2v2h-2zM207 371h2v2h-2zM208 370h2v1h-2zM210 368h2v1h-2zM211 366h2v1h-2zM212 365h2v1h-2zM213 363h1v1h-1zM214 361h2v2h-2zM215 359h2v1h-2zM217 358h2v1h-2zM218 356h2v2h-2zM219 354h2v2h-2zM221 353h2v1h-2zM222 351h1v1h-1zM223 350h2v1h-2zM224 349h2v1h-2zM226 346h2v1h-2zM227 345h2v1h-2zM228 343h2v1h-2zM230 342h2v2h-2zM231 339h2v1h-2zM232 338h2v1h-2zM234 337h1v1h-1zM235 335h2v1h-2zM236 332h2v1h-2zM238 329h2v1h-2zM240 328h1v1h-1zM241 325h2v2h-2zM242 324h2v1h-2zM243 322h2v1h-2zM245 320h2v1h-2zM246 317h1v2h-1zM247 315h1v3h-1zM249 312h1v1h-1zM250 310h1v3h-1zM251 308h1v1h-1zM253 306h1v3h-1zM254 304h1v2h-1zM255 301h1v2h-1zM256 299h1v2h-1zM258 297h2v1h-2zM259 294h1v2h-1zM261 290h1v2h-1zM262 288h1v2h-1zM263 286h1v3h-1zM265 283h1v2h-1zM266 280h1v2h-1zM267 278h1v1h-1zM269 275h1v3h-1zM270 272h1v2h-1zM272 269h1v2h-1zM273 267h1v2h-1zM274 265h1v2h-1zM275 261h1v2h-1zM276 258h1v1h-1zM278 256h1v3h-1zM279 253h1v2h-1zM280 250h1v2h-1zM281 246h1v2h-1zM283 243h1v2h-1zM284 241h1v3h-1zM285 238h1v3h-1zM286 235h1v2h-1zM288 232h2v1h-2zM289 230h1v2h-1zM290 226h1v3h-1zM291 224h1v3h-1zM292 221h1v2h-1zM293 219h1v2h-1zM295 215h1v2h-1zM296 212h2v1h-2zM297 209h1v2h-1zM298 206h1v2h-1zM300 203h1v2h-1zM301 200h1v2h-1zM302 197h1v2h-1zM303 195h1v3h-1zM304 191h1v2h-1zM305 189h1v2h-1zM307 186h1v1h-1zM308 182h1v3h-1zM308 179h1v2h-1zM310 176h1v1h-1zM311 173h1v2h-1zM312 170h1v1h-1zM313 168h2v1h-2zM314 165h2v1h-2zM315 161h1v2h-1zM316 158h1v2h-1zM318 155h1v1h-1zM319 151h1v2h-1zM320 148h1v2h-1zM321 145h1v2h-1zM322 143h1v2h-1zM323 141h1v3h-1zM324 137h2v1h-2zM325 134h2v1h-2zM326 131h1v2h-1zM327 126h1v1h-1zM328 124h1v2h-1zM329 120h1v2h-1zM330 117h1v2h-1zM331 115h1v1h-1zM333 111h1v2h-1zM334 108h1v2h-1zM336 106h2v1h-2zM337 104h1v2h-1zM338 101h1v2h-1zM138 396h2v1h-2zM139 396h2v1h-2zM140 396h2v2h-2zM141 396h2v1h-2zM143 396h2v1h-2zM144 396h2v1h-2zM145 396h2v2h-2zM147 396h2v1h-2zM148 396h1v1h-1zM150 396h2v1h-2zM151 396h2v1h-2zM153 396h2v1h-2zM155 396h1v1h-1zM156 395h2v1h-2zM157 396h2v1h-2zM158 396h2v1h-2zM160 395h1v1h-1zM161 395h2v2h-2zM162 394h1v1h-1zM163 394h2v1h-2zM165 394h2v2h-2zM166 394h1v1h-1zM168 394h1v1h-1zM169 392h2v2h-2zM170 392h2v1h-2zM171 393h2v2h-2zM172 391h1v1h-1zM174 392h2v1h-2zM175 391h2v2h-2zM176 391h2v1h-2zM178 391h2v1h-2zM179 390h2v2h-2zM181 390h2v1h-2zM182 388h2v1h-2zM184 388h2v1h-2zM186 387h2v1h-2zM187 386h1v1h-1zM189 385h2v2h-2zM190 385h2v1h-2zM191 384h2v1h-2zM192 384h1v1h-1zM193 384h1v1h-1zM195 383h2v1h-2zM196 383h2v2h-2zM197 382h2v1h-2zM198 381h2v2h-2zM199 381h1v1h-1zM201 380h1v1h-1zM202 379h1v1h-1zM203 378h2v1h-2zM204 377h2v1h-2zM205 377h2v1h-2zM206 376h2v2h-2zM208 375h2v1h-2zM210 374h2v2h-2zM211 373h2v1h-2zM212 373h1v1h-1zM214 372h2v1h-2zM215 371h2v2h-2zM216 369h2v1h-2zM217 369h2v2h-2zM218 367h2v1h-2zM220 366h2v1h-2zM221 364h2v1h-2zM223 363h2v2h-2zM224 361h2v1h-2zM225 359h2v1h-2zM227 357h2v1h-2zM228 355h2v1h-2zM230 354h1v1h-1zM231 353h2v1h-2zM233 351h2v1h-2zM234 349h2v1h-2zM236 347h2v2h-2zM237 345h2v1h-2zM238 343h1v1h-1zM240 341h1v1h-1zM241 339h2v1h-2zM243 337h2v1h-2zM244 335h2v1h-2zM245 333h2v1h-2zM247 331h2v1h-2zM248 329h2v1h-2zM249 327h2v1h-2zM251 325h1v1h-1zM252 323h1v2h-1zM253 322h1v2h-1zM254 319h1v2h-1zM256 316h2v2h-2zM257 314h1v1h-1zM258 312h2v2h-2zM260 311h2v1h-2zM261 310h2v1h-2zM262 307h2v1h-2zM264 305h2v1h-2zM265 303h2v1h-2zM267 300h2v1h-2zM268 297h1v1h-1zM270 295h1v2h-1zM271 293h2v1h-2zM272 291h1v1h-1zM274 288h1v1h-1zM275 286h1v2h-1zM277 284h1v2h-1zM278 281h1v1h-1zM280 279h1v2h-1zM281 276h1v3h-1zM282 274h2v1h-2zM284 270h1v2h-1zM285 268h1v2h-1zM287 266h1v2h-1zM288 264h1v2h-1zM289 260h1v2h-1zM291 259h1v2h-1zM292 256h1v2h-1zM293 254h1v2h-1zM294 251h1v2h-1zM295 249h2v1h-2zM297 245h1v3h-1zM299 243h1v2h-1zM300 240h1v3h-1zM301 237h1v2h-1zM302 235h1v1h-1zM303 233h1v2h-1zM305 231h1v3h-1zM306 227h1v2h-1zM307 225h1v2h-1zM309 222h2v1h-2zM310 219h1v1h-1zM311 217h2v1h-2zM312 214h1v2h-1zM314 210h1v2h-1zM315 209h1v2h-1zM316 205h1v2h-1zM317 203h1v2h-1zM318 200h1v1h-1zM320 197h1v3h-1zM321 195h1v2h-1zM322 191h1v2h-1zM323 189h1v2h-1zM324 185h1v3h-1zM326 183h1v1h-1zM327 179h1v2h-1zM328 176h1v2h-1zM329 174h1v2h-1zM331 170h1v2h-1zM332 167h1v2h-1zM333 165h1v3h-1zM334 162h1v2h-1zM335 160h1v1h-1zM167 396h2v1h-2zM168 396h2v2h-2zM170 396h2v1h-2zM172 396h2v1h-2zM173 396h2v1h-2zM174 396h1v1h-1zM176 396h2v2h-2zM177 396h2v1h-2zM179 396h2v1h-2zM181 396h1v1h-1zM182 395h2v1h-2zM184 395h2v1h-2zM185 395h2v2h-2zM186 394h2v1h-2zM188 395h2v1h-2zM189 394h1v1h-1zM190 394h2v1h-2zM192 393h2v1h-2zM193 392h2v1h-2zM194 392h2v2h-2zM196 391h2v2h-2zM197 391h1v1h-1zM198 391h2v1h-2zM200 390h2v1h-2zM201 390h1v1h-1zM203 389h2v1h-2zM204 388h2v1h-2zM205 388h2v1h-2zM207 387h2v1h-2zM208 386h2v1h-2zM209 386h2v1h-2zM211 384h2v2h-2zM212 384h1v1h-1zM213 383h2v1h-2zM215 382h2v1h-2zM217 381h2v1h-2zM218 380h2v1h-2zM219 379h2v1h-2zM221 378h1v1h-1zM222 378h2v2h-2zM224 376h2v2h-2zM225 375h2v1h-2zM227 374h2v1h-2zM228 372h2v1h-2zM229 372h2v1h-2zM231 370h2v1h-2zM232 368h2v1h-2zM234 366h2v1h-2zM235 364h2v2h-2zM236 363h1v1h-1zM237 361h1v1h-1zM239 360h2v1h-2zM240 358h2v1h-2zM241 356h2v1h-2zM243 355h2v1h-2zM244 353h2v1h-2zM245 351h2v1h-2zM247 350h1v1h-1zM248 347h2v1h-2zM249 347h2v1h-2zM251 344h2v1h-2zM252 343h2v1h-2zM254 341h1v1h-1zM255 338h2v1h-2zM257 337h2v1h-2zM258 334h2v1h-2zM260 332h2v1h-2zM261 331h2v2h-2zM263 328h2v1h-2zM264 327h1v1h-1zM265 324h2v1h-2zM267 321h2v2h-2zM268 319h2v1h-2zM269 317h1v3h-1zM271 315h2v1h-2zM272 313h1v2h-1zM273 311h1v3h-1zM274 310h1v2h-1zM275 308h1v2h-1zM277 305h1v2h-1zM278 302h1v2h-1zM279 301h1v2h-1zM281 298h1v2h-1zM282 296h1v2h-1zM283 294h1v3h-1zM285 291h1v2h-1zM286 288h1v2h-1zM288 285h1v2h-1zM289 283h1v3h-1zM290 281h1v3h-1zM292 279h1v2h-1zM293 276h1v2h-1zM294 273h2v1h-2zM296 271h1v1h-1zM297 267h1v3h-1zM299 265h1v2h-1zM300 262h1v1h-1zM301 260h1v2h-1zM302 257h1v2h-1zM304 254h1v2h-1zM305 252h1v2h-1zM306 249h1v2h-1zM307 245h1v2h-1zM309 242h1v3h-1zM310 240h1v2h-1zM312 237h1v2h-1zM313 234h1v2h-1zM314 231h1v2h-1zM315 227h2v1h-2zM317 226h1v2h-1zM318 222h1v1h-1zM319 220h1v2h-1zM320 218h1v2h-1zM321 214h1v2h-1zM322 212h1v2h-1zM323 209h1v3h-1zM324 206h1v1h-1zM325 203h1v2h-1zM327 201h1v3h-1zM328 197h1v2h-1zM329 194h1v1h-1zM330 192h2v1h-2zM331 187h2v1h-2zM332 186h1v2h-1zM333 183h1v2h-1zM334 180h1v3h-1zM336 177h1v2h-1zM159 396h2v1h-2zM160 396h2v1h-2zM161 396h2v1h-2zM163 396h2v1h-2zM164 396h2v1h-2zM166 396h2v1h-2zM167 396h2v1h-2zM169 396h2v1h-2zM171 396h2v1h-2zM172 396h2v1h-2zM174 396h1v1h-1zM175 396h2v2h-2zM176 396h2v1h-2zM178 396h1v1h-1zM179 396h2v1h-2zM180 396h2v1h-2zM182 395h1v1h-1zM183 395h2v2h-2zM185 395h1v1h-1zM186 394h2v1h-2zM187 394h1v1h-1zM189 393h1v1h-1zM190 394h2v1h-2zM191 393h2v2h-2zM192 393h2v2h-2zM193 392h2v1h-2zM195 392h2v1h-2zM196 391h2v2h-2zM197 391h2v1h-2zM199 391h2v1h-2zM200 390h1v1h-1zM201 389h1v1h-1zM203 389h2v1h-2zM204 389h2v1h-2zM205 389h1v1h-1zM207 388h1v1h-1zM208 387h2v2h-2zM209 387h1v1h-1zM211 386h2v2h-2zM212 386h2v1h-2zM214 385h1v1h-1zM215 384h1v1h-1zM216 384h2v1h-2zM218 383h2v1h-2zM219 383h2v1h-2zM220 382h2v2h-2zM222 381h2v1h-2zM223 380h2v1h-2zM225 379h2v1h-2zM226 379h1v1h-1zM227 379h2v2h-2zM229 378h2v1h-2zM230 376h2v2h-2zM231 375h1v1h-1zM232 375h2v1h-2zM234 375h1v1h-1zM235 373h2v2h-2zM237 373h2v1h-2zM238 371h2v1h-2zM239 370h2v2h-2zM241 369h2v1h-2zM242 367h1v1h-1zM244 366h1v1h-1zM245 364h2v1h-2zM246 364h1v1h-1zM248 362h2v1h-2zM249 360h2v2h-2zM251 358h2v2h-2zM252 357h1v1h-1zM253 355h2v1h-2zM255 353h2v1h-2zM256 351h1v1h-1zM257 350h2v1h-2zM258 349h2v2h-2zM259 347h2v1h-2zM261 345h2v1h-2zM262 344h2v1h-2zM264 342h1v1h-1zM265 339h2v1h-2zM266 337h2v1h-2zM267 336h2v1h-2zM269 333h2v1h-2zM270 332h2v1h-2zM272 328h2v1h-2zM274 327h2v1h-2zM275 325h1v1h-1zM276 322h1v2h-1zM277 321h1v3h-1zM278 319h1v3h-1zM279 318h2v1h-2zM281 316h1v1h-1zM282 314h2v1h-2zM283 311h2v1h-2zM284 310h2v2h-2zM286 308h2v1h-2zM287 306h2v1h-2zM289 304h2v1h-2zM290 302h2v2h-2zM292 300h1v1h-1zM293 298h2v1h-2zM294 296h1v1h-1zM295 294h1v1h-1zM297 291h1v1h-1zM298 290h1v2h-1zM299 288h1v2h-1zM300 285h1v1h-1zM302 283h1v2h-1zM303 281h2v1h-2zM304 279h1v3h-1zM305 277h1v2h-1zM307 275h1v2h-1zM308 272h1v3h-1zM309 270h1v2h-1zM311 268h1v2h-1zM312 266h1v2h-1zM314 264h1v3h-1zM315 260h1v2h-1zM316 258h1v2h-1zM318 255h1v3h-1zM319 252h1v3h-1zM320 250h1v2h-1zM322 249h1v2h-1zM323 246h2v1h-2zM324 244h1v2h-1zM326 241h1v3h-1zM327 238h1v2h-1zM328 235h1v2h-1zM330 233h2v1h-2zM331 230h1v2h-1zM332 228h1v2h-1zM334 225h1v2h-1zM335 222h1v2h-1zM336 219h2v2h-2z" fill="#ffff00" shape-rendering="crispEdges"/></svg>
<div class="t" style="left:21px;top:60px;font-size:12px;color:#fff;letter-spacing:-0.45px">Stopped</div>

<div class="t" style="left:349px;top:400px;font-size:11px;color:#fff;letter-spacing:0.3px">Sa/Sec</div>
<div class="t" style="left:394px;top:400px;font-size:11px;color:#fff">200,000</div>
<div class="t" style="left:350px;top:415px;font-size:11px;color:#fff;letter-spacing:0.3px">T/Div</div>
<div class="t" style="left:384px;top:415px;font-size:11px;color:#fff">0.00040</div>
<div class="t" style="left:426px;top:415px;font-size:11px;color:#fff">Sec</div>
<div class="t" style="left:350px;top:430px;font-size:11px;color:#fff;letter-spacing:0.3px">V/Div</div>
<div class="t" style="left:384px;top:430px;font-size:11px;color:#fff">A</div>
<div class="t" style="left:394px;top:430px;font-size:11px;color:#fff">0.5</div>
<div class="t" style="left:419px;top:430px;font-size:11px;color:#fff">B</div>
<div class="t" style="left:429px;top:430px;font-size:11px;color:#fff">0.1</div>
<div class="grp" style="left:475px;top:49px;width:57px;height:185px"></div>
<div class="t" style="top:59px;font-size:12px;color:#000;font-weight:normal;left:485px;text-shadow:1px 1px 0 #fff">Offset</div>
<div class="t" style="top:80px;font-size:11px;color:#000;font-weight:normal;left:492px;text-shadow:1px 1px 0 #fff">CHA</div>
<div class="btn" style="left:490px;top:96px;width:28px;height:24px"></div>
<svg class="a" style="left:0;top:0;overflow:visible" width="1" height="1"><polygon points="500.0,110 509.0,110 504.5,105" fill="#000"/></svg>
<div class="btn" style="left:490px;top:120px;width:28px;height:25px"></div>
<svg class="a" style="left:0;top:0;overflow:visible" width="1" height="1"><polygon points="500.0,130 509.0,130 504.5,134.5" fill="#000"/></svg>
<div class="t" style="top:156px;font-size:11px;color:#000;font-weight:normal;left:492px;text-shadow:1px 1px 0 #fff">CHB</div>
<div class="btn" style="left:490px;top:171px;width:28px;height:24px"></div>
<svg class="a" style="left:0;top:0;overflow:visible" width="1" height="1"><polygon points="500.0,185 509.0,185 504.5,180" fill="#000"/></svg>
<div class="btn" style="left:490px;top:195px;width:28px;height:25px"></div>
<svg class="a" style="left:0;top:0;overflow:visible" width="1" height="1"><polygon points="500.0,205 509.0,205 504.5,209.5" fill="#000"/></svg>
<div class="grp" style="left:540px;top:49px;width:208px;height:185px"></div>
<div class="t" style="top:59px;font-size:18px;color:#000;font-weight:bold;letter-spacing:0.2px;left:574px;text-shadow:1px 1px 0 #9d9a8c">TimeBase T/Div</div>
<div class="t" style="top:87px;font-size:11px;color:#000;font-weight:normal;letter-spacing:-0.2px;right:131px;">10ms</div>
<div class="t" style="top:89px;font-size:11px;color:#000;font-weight:normal;letter-spacing:-0.2px;left:656px;">20ms</div>
<div class="t" style="top:102px;font-size:11px;color:#000;font-weight:normal;letter-spacing:-0.2px;left:678px;">40ms</div>
<div class="t" style="top:122px;font-size:11px;color:#000;font-weight:normal;letter-spacing:-0.2px;left:693px;">100ms</div>
<div class="t" style="top:146px;font-size:11px;color:#000;font-weight:normal;letter-spacing:-0.2px;left:698px;">200ms</div>
<div class="t" style="top:171px;font-size:11px;color:#000;font-weight:normal;letter-spacing:-0.2px;left:693px;">400ms</div>
<div class="t" style="top:191px;font-size:11px;color:#000;font-weight:normal;letter-spacing:-0.2px;left:677px;">1sec</div>
<div class="t" style="top:205px;font-size:11px;color:#000;font-weight:normal;letter-spacing:-0.2px;left:538.5px;width:200px;text-align:center;">50us</div>
<div class="t" style="top:200px;font-size:11px;color:#000;font-weight:normal;letter-spacing:-0.2px;right:147px;">100us</div>
<div class="t" style="top:185px;font-size:11px;color:#000;font-weight:normal;letter-spacing:-0.2px;right:167px;">200us</div>
<div class="t" style="top:162px;font-size:11px;color:#000;font-weight:normal;letter-spacing:-0.2px;right:179px;">400us</div>
<div class="t" style="top:138px;font-size:11px;color:#000;font-weight:normal;letter-spacing:-0.2px;right:181px;">1ms</div>
<div class="t" style="top:114px;font-size:11px;color:#000;font-weight:normal;letter-spacing:-0.2px;right:173px;">2ms</div>
<div class="t" style="top:96px;font-size:11px;color:#000;font-weight:normal;letter-spacing:-0.2px;right:154px;">4ms</div>
<div class="grp" style="left:475px;top:241px;width:275px;height:217px"></div>
<div class="btn2" style="left:485px;top:251px;width:49px;height:25px"></div>
<div class="a" style="left:491px;top:259px;width:10px;height:10px;background:#00ff00;border:1px solid #000;box-shadow:-1px -1px 0 #c4c0b0,1px 1px 0 #fff"></div>
<div class="t" style="top:258px;font-size:12px;color:#000;font-weight:normal;letter-spacing:-0.9px;left:507px;">CHA</div>
<div class="chk" style="left:540px;top:252px"></div>
<div class="btn2" style="left:485px;top:283px;width:49px;height:25px"></div>
<div class="a" style="left:493px;top:291px;width:10px;height:10px;background:#008000;border:1px solid #000;box-shadow:-1px -1px 0 #c4c0b0,1px 1px 0 #fff"></div>
<div class="t" style="top:290px;font-size:12px;color:#000;font-weight:normal;letter-spacing:-0.3px;left:508px;">X10</div>
<div class="sw" style="left:486px;top:319px;width:26px;height:24px"><div class="lev" style="left:0px;top:10px;width:24px;height:12px"><div class="slot"></div></div></div>
<div class="t" style="top:316px;font-size:13px;color:#000;font-weight:normal;left:519px;text-shadow:1px 1px 0 #fff">AC</div>
<div class="t" style="top:332px;font-size:13px;color:#00f000;font-weight:normal;left:519px;text-shadow:1px 1px 0 #a890b0">DC</div>
<div class="t" style="top:250px;font-size:13px;color:#000;font-weight:normal;left:575px;text-shadow:1px 1px 0 #fff">Volts/Div</div>
<div class="t" style="top:266px;font-size:11px;color:#000;font-weight:normal;left:597px;">1.0</div>
<div class="t" style="top:284px;font-size:11px;color:#000;font-weight:normal;left:635px;">2.0</div>
<div class="t" style="top:317px;font-size:11px;color:#000;font-weight:normal;left:635px;">5.0</div>
<div class="t" style="top:336px;font-size:11px;color:#000;font-weight:normal;left:595px;">0.10</div>
<div class="t" style="top:284px;font-size:11px;color:#000;font-weight:normal;left:554px;">0.50</div>
<div class="t" style="top:317px;font-size:11px;color:#000;font-weight:normal;left:554px;">0.20</div>
<div class="btn2" style="left:485px;top:355px;width:49px;height:25px"></div>
<div class="a" style="left:491px;top:363px;width:10px;height:10px;background:#00ff00;border:1px solid #000;box-shadow:-1px -1px 0 #c4c0b0,1px 1px 0 #fff"></div>
<div class="t" style="top:362px;font-size:12px;color:#000;font-weight:normal;letter-spacing:-0.9px;left:507px;">CHB</div>
<div class="chk" style="left:540px;top:356px"></div>
<div class="btn2" style="left:485px;top:387px;width:49px;height:25px"></div>
<div class="a" style="left:493px;top:395px;width:10px;height:10px;background:#008000;border:1px solid #000;box-shadow:-1px -1px 0 #c4c0b0,1px 1px 0 #fff"></div>
<div class="t" style="top:394px;font-size:12px;color:#000;font-weight:normal;letter-spacing:-0.3px;left:508px;">X10</div>
<div class="sw" style="left:486px;top:423px;width:26px;height:24px"><div class="lev" style="left:0px;top:10px;width:24px;height:12px"><div class="slot"></div></div></div>
<div class="t" style="top:420px;font-size:13px;color:#000;font-weight:normal;left:519px;text-shadow:1px 1px 0 #fff">AC</div>
<div class="t" style="top:436px;font-size:13px;color:#00f000;font-weight:normal;left:519px;text-shadow:1px 1px 0 #a890b0">DC</div>
<div class="t" style="top:354px;font-size:13px;color:#000;font-weight:normal;left:575px;text-shadow:1px 1px 0 #fff">Volts/Div</div>
<div class="t" style="top:370px;font-size:11px;color:#000;font-weight:normal;left:597px;">1.0</div>
<div class="t" style="top:388px;font-size:11px;color:#000;font-weight:normal;left:635px;">2.0</div>
<div class="t" style="top:421px;font-size:11px;color:#000;font-weight:normal;left:635px;">5.0</div>
<div class="t" style="top:440px;font-size:11px;color:#000;font-weight:normal;left:595px;">0.10</div>
<div class="t" style="top:388px;font-size:11px;color:#000;font-weight:normal;left:554px;">0.50</div>
<div class="t" style="top:421px;font-size:11px;color:#000;font-weight:normal;left:554px;">0.20</div>
<div class="t" style="top:250px;font-size:13px;color:#000;font-weight:normal;letter-spacing:-0.45px;left:664px;text-shadow:1px 1px 0 #fff">Trigger</div>
<div class="sw" style="left:670px;top:271px;width:26px;height:36px"><div class="lev" style="left:0px;top:11px;width:24px;height:12px"><div class="slot"></div></div></div>
<div class="t" style="top:266px;font-size:13px;color:#000;font-weight:normal;left:703px;text-shadow:1px 1px 0 #fff">Auto</div>
<div class="t" style="top:282px;font-size:13px;color:#000;font-weight:normal;letter-spacing:-0.2px;left:703px;text-shadow:1px 1px 0 #fff">CHA</div>
<div class="t" style="top:298px;font-size:13px;color:#000;font-weight:normal;letter-spacing:-0.2px;left:703px;text-shadow:1px 1px 0 #fff">CHB</div>
<div class="sw" style="left:670px;top:323px;width:26px;height:24px"><div class="lev" style="left:0px;top:0px;width:24px;height:12px"><div class="slot"></div></div></div>
<div class="t" style="top:324px;font-size:12px;color:#000;font-weight:normal;letter-spacing:-0.3px;left:704px;text-shadow:1px 1px 0 #fff">+ve</div>
<div class="t" style="top:338px;font-size:12px;color:#000;font-weight:normal;letter-spacing:-0.3px;left:704px;text-shadow:1px 1px 0 #fff">-ve</div>
<div class="btn" style="left:669px;top:358px;width:26px;height:20px"></div>
<svg class="a" style="left:0;top:0;overflow:visible" width="1" height="1"><polygon points="678.0,370 687.0,370 682.5,365" fill="#000"/></svg>
<div class="btn" style="left:669px;top:378px;width:26px;height:20px"></div>
<svg class="a" style="left:0;top:0;overflow:visible" width="1" height="1"><polygon points="678.0,385 687.0,385 682.5,389.5" fill="#000"/></svg>
<div class="t" style="top:367px;font-size:13px;color:#000;font-weight:normal;left:703px;text-shadow:1px 1px 0 #fff">Trig</div>
<div class="t" style="top:383px;font-size:13px;color:#000;font-weight:normal;letter-spacing:-0.3px;left:703px;text-shadow:1px 1px 0 #fff">Level</div>
<div class="sw" style="left:670px;top:409px;width:26px;height:36px"><div class="lev" style="left:0px;top:11px;width:24px;height:12px"><div class="slot"></div></div></div>
<div class="t" style="top:405px;font-size:13px;color:#000;font-weight:normal;left:703px;text-shadow:1px 1px 0 #fff">10 %</div>
<div class="t" style="top:422px;font-size:13px;color:#000;font-weight:normal;left:703px;text-shadow:1px 1px 0 #fff">50 %</div>
<div class="t" style="top:437px;font-size:13px;color:#000;font-weight:normal;left:703px;text-shadow:1px 1px 0 #fff">90 %</div>
<svg class="a" style="left:0;top:0" width="761" height="505"><defs><linearGradient id="kg" x1="0" y1="0" x2="1" y2="1"><stop offset="0" stop-color="#e4e4e4"/><stop offset="0.5" stop-color="#c8c8c8"/><stop offset="1" stop-color="#a8a8a8"/></linearGradient></defs><line x1="639.00" y1="201.00" x2="639.00" y2="206.00" stroke="#000" stroke-width="1"/><line x1="618.17" y1="196.46" x2="616.09" y2="201.00" stroke="#000" stroke-width="1"/><line x1="601.13" y1="183.65" x2="597.35" y2="186.92" stroke="#000" stroke-width="1"/><line x1="590.97" y1="164.91" x2="586.17" y2="166.30" stroke="#000" stroke-width="1"/><line x1="589.54" y1="143.64" x2="584.60" y2="142.91" stroke="#000" stroke-width="1"/><line x1="597.10" y1="123.71" x2="592.91" y2="120.98" stroke="#000" stroke-width="1"/><line x1="612.28" y1="108.74" x2="609.60" y2="104.51" stroke="#000" stroke-width="1"/><line x1="632.31" y1="101.45" x2="631.64" y2="96.49" stroke="#000" stroke-width="1"/><line x1="653.55" y1="103.17" x2="655.01" y2="98.38" stroke="#000" stroke-width="1"/><line x1="672.16" y1="113.57" x2="675.47" y2="109.83" stroke="#000" stroke-width="1"/><line x1="684.73" y1="130.79" x2="689.30" y2="128.76" stroke="#000" stroke-width="1"/><line x1="689.00" y1="151.67" x2="694.00" y2="151.74" stroke="#000" stroke-width="1"/><line x1="684.17" y1="172.43" x2="688.69" y2="174.58" stroke="#000" stroke-width="1"/><line x1="671.14" y1="189.30" x2="674.35" y2="193.13" stroke="#000" stroke-width="1"/><circle cx="639" cy="151" r="49.5" fill="#808080" stroke="#000" stroke-width="1"/><path d="M605.77 184.23A47.0 47.0 0 0 1 672.23 117.77" stroke="#fff" stroke-width="4" fill="none"/><path d="M672.23 117.77A47.0 47.0 0 0 1 605.77 184.23" stroke="#808080" stroke-width="4" fill="none"/><circle cx="639" cy="151" r="45.0" fill="#c0c0c0"/><g transform="translate(639 151) rotate(-16.15)"><path d="M44 -6.5L-39.6 -6.5A6.5 6.5 0 0 0 -39.6 6.5L44 6.5" fill="#c0c0c0" stroke="none"/><path d="M44 -6.0L-39.6 -6.0A6.0 6.0 0 0 0 -45.6 0" stroke="#fff" stroke-width="1" fill="none"/><path d="M-45.6 0A6.0 6.0 0 0 0 -39.6 5.5L44 5.5" stroke="#808080" stroke-width="2" fill="none"/><circle cx="-39.6" cy="0" r="2.6" fill="#ff0000" stroke="#000" stroke-width="1"/></g><line x1="605.00" y1="280.50" x2="605.00" y2="276.50" stroke="#000" stroke-width="1"/><line x1="627.08" y1="293.25" x2="630.55" y2="291.25" stroke="#000" stroke-width="1"/><line x1="627.08" y1="318.75" x2="630.55" y2="320.75" stroke="#000" stroke-width="1"/><line x1="605.00" y1="331.50" x2="605.00" y2="335.50" stroke="#000" stroke-width="1"/><line x1="582.92" y1="318.75" x2="579.45" y2="320.75" stroke="#000" stroke-width="1"/><line x1="582.92" y1="293.25" x2="579.45" y2="291.25" stroke="#000" stroke-width="1"/><circle cx="605" cy="306" r="25" fill="#808080" stroke="#000" stroke-width="1"/><path d="M589.09 321.91A22.5 22.5 0 0 1 620.91 290.09" stroke="#fff" stroke-width="4" fill="none"/><path d="M620.91 290.09A22.5 22.5 0 0 1 589.09 321.91" stroke="#808080" stroke-width="4" fill="none"/><circle cx="605" cy="306" r="20.5" fill="url(#kg)"/><circle cx="605" cy="306" r="17.5" fill="#c0c0c0"/><g transform="translate(605 306) rotate(-330.00)"><path d="M19 -6.0L-14.0 -6.0A6.0 6.0 0 0 0 -14.0 6.0L19 6.0" fill="#c0c0c0" stroke="none"/><path d="M19 -5.5L-14.0 -5.5A5.5 5.5 0 0 0 -19.5 0" stroke="#fff" stroke-width="1" fill="none"/><path d="M-19.5 0A5.5 5.5 0 0 0 -14.0 5.0L19 5.0" stroke="#808080" stroke-width="2" fill="none"/><circle cx="-14.0" cy="0" r="2.6" fill="#ff0000" stroke="#000" stroke-width="1"/></g><line x1="605.00" y1="384.50" x2="605.00" y2="380.50" stroke="#000" stroke-width="1"/><line x1="627.08" y1="397.25" x2="630.55" y2="395.25" stroke="#000" stroke-width="1"/><line x1="627.08" y1="422.75" x2="630.55" y2="424.75" stroke="#000" stroke-width="1"/><line x1="605.00" y1="435.50" x2="605.00" y2="439.50" stroke="#000" stroke-width="1"/><line x1="582.92" y1="422.75" x2="579.45" y2="424.75" stroke="#000" stroke-width="1"/><line x1="582.92" y1="397.25" x2="579.45" y2="395.25" stroke="#000" stroke-width="1"/><circle cx="605" cy="410" r="25" fill="#808080" stroke="#000" stroke-width="1"/><path d="M589.09 425.91A22.5 22.5 0 0 1 620.91 394.09" stroke="#fff" stroke-width="4" fill="none"/><path d="M620.91 394.09A22.5 22.5 0 0 1 589.09 425.91" stroke="#808080" stroke-width="4" fill="none"/><circle cx="605" cy="410" r="20.5" fill="url(#kg)"/><circle cx="605" cy="410" r="17.5" fill="#c0c0c0"/><circle cx="605" cy="410" r="15.5" fill="none" stroke="#404040" stroke-width="1" stroke-dasharray="3 3"/><g transform="translate(605 410) rotate(-90.00)"><path d="M19 -6.0L-15.0 -6.0A6.0 6.0 0 0 0 -15.0 6.0L19 6.0" fill="#c0c0c0" stroke="none"/><path d="M19 -5.5L-15.0 -5.5A5.5 5.5 0 0 0 -20.5 0" stroke="#fff" stroke-width="1" fill="none"/><path d="M-20.5 0A5.5 5.5 0 0 0 -15.0 5.0L19 5.0" stroke="#808080" stroke-width="2" fill="none"/><circle cx="-15.0" cy="0" r="2.6" fill="#ff0000" stroke="#000" stroke-width="1"/></g></svg>
<!-- bottom panel -->
<div class="panel" style="left:11px;top:461px;width:737px;height:35px"></div>
<div class="bbtn" style="left:20px;top:464px;letter-spacing:-0.5px">Illuminate</div>
<div class="bbtn" style="left:84px;top:464px">Sweep</div>
<div class="bbtn" style="left:148px;top:464px">FFT</div>
<div class="bbtn" style="left:228px;top:464px;color:#7c8ce8">Cur Horiz</div>
<div class="bbtn" style="left:292px;top:464px">Cur A</div>
<div class="bbtn" style="left:356px;top:464px">Cur B</div>
<div class="bbtn" style="left:612px;top:464px">Single</div>
<div class="bbtn" style="left:676px;top:464px">Run</div>
</body></html>
